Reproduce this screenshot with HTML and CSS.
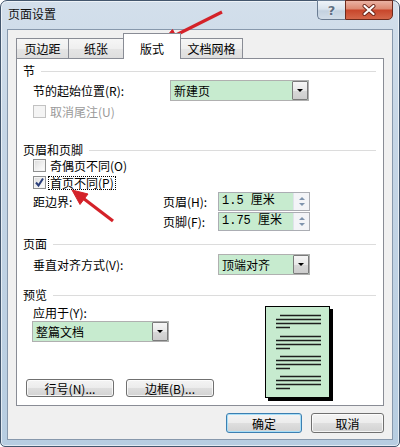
FILE: index.html
```html
<!DOCTYPE html>
<html lang="zh-CN">
<head>
<meta charset="utf-8">
<title>页面设置</title>
<link rel="stylesheet" href="styles.css">
</head>
<body>
<div class="window">
  <div class="titlebar">
    <span class="title">页面设置</span>
    <div class="caption-buttons">
      <div class="cap-btn help">?</div>
      <div class="cap-btn close">
        <svg width="16" height="12" viewBox="0 0 16 12"><path d="M3.5 2 L12.5 10 M12.5 2 L3.5 10" stroke="#6a2418" stroke-width="4" stroke-linecap="round"/><path d="M3.5 2 L12.5 10 M12.5 2 L3.5 10" stroke="#ffffff" stroke-width="2.2" stroke-linecap="round"/></svg>
      </div>
    </div>
  </div>
  <div class="client">
    <div class="tabs">
      <div class="tab t1">页边距</div>
      <div class="tab t2">纸张</div>
      <div class="tab t3 active">版式</div>
      <div class="tab t4">文档网格</div>
    </div>
    <div class="panel">
      <div class="group-title gt-section"><span>节</span><i></i></div>
      <div class="row row-start">
        <span class="lbl lbl-start">节的起始位置(R):</span>
        <div class="select sel-start"><span class="val">新建页</span><b class="dd"></b></div>
      </div>
      <div class="check disabled chk-endnote"><span class="box"></span><span class="ctext">取消尾注(U)</span></div>

      <div class="group-title gt-header"><span>页眉和页脚</span><i></i></div>
      <div class="check chk-odd"><span class="box"></span><span class="ctext">奇偶页不同(O)</span></div>
      <div class="check chk-first"><span class="box checked"><svg width="11" height="11" viewBox="0 0 11 11"><path d="M2 5.5 L4.5 8.5 L9 1.5" fill="none" stroke="#2b3f7a" stroke-width="2"/></svg></span><span class="ctext focus">首页不同(P)</span></div>

      <div class="margin-row mr-1">
        <span class="lbl">距边界:</span>
        <span class="lbl">页眉(H):</span>
        <div class="spin"><span class="val mono">1.5 厘米</span><span class="spin-btns"><b class="up"></b><b class="down"></b></span></div>
      </div>
      <div class="margin-row mr-2">
        <span class="lbl"></span>
        <span class="lbl">页脚(F):</span>
        <div class="spin"><span class="val mono">1.75 厘米</span><span class="spin-btns"><b class="up"></b><b class="down"></b></span></div>
      </div>

      <div class="group-title gt-page"><span>页面</span><i></i></div>
      <div class="row row-valign">
        <span class="lbl lbl-valign">垂直对齐方式(V):</span>
        <div class="select sel-valign"><span class="val">顶端对齐</span><b class="dd"></b></div>
      </div>

      <div class="group-title gt-preview"><span>预览</span><i></i></div>
      <div class="preview">
        <div class="preview-left">
          <div class="lbl apply-lbl">应用于(Y):</div>
          <div class="select sel-apply"><span class="val">整篇文档</span><b class="dd"></b></div>
          <div class="btn-row">
            <div class="btn small">行号(N)...</div>
            <div class="btn small">边框(B)...</div>
          </div>
        </div>
        <div class="page">
          <svg width="63" height="90" viewBox="0 0 63 90">
            <g stroke="#1e1e1e" stroke-width="1.3">
              <path d="M14 8.5 H55 M10 12.5 H55 M10 16.5 H55 M10 20.5 H24"/>
              <path d="M14 29.5 H55 M10 33.5 H55 M10 37.5 H55 M10 41.5 H24"/>
              <path d="M14 49.5 H55 M10 53.5 H55 M10 57.5 H55 M10 61.5 H24"/>
              <path d="M14 69.5 H55 M10 73.5 H55 M10 77.5 H55 M10 81.5 H24"/>
            </g>
          </svg>
        </div>
      </div>
    </div>
    <div class="dialog-buttons">
      <div class="btn default">确定</div>
      <div class="btn cancel">取消</div>
    </div>
  </div>
</div>
<svg class="arrows" width="400" height="447" viewBox="0 0 400 447">
  <g fill="#d42229" stroke="#d42229">
    <line x1="222" y1="12" x2="175" y2="35.5" stroke-width="3.2"/>
    <polygon points="161,43 178.5,41 172.5,29.5" stroke-width="1"/>
    <line x1="113" y1="221" x2="83.5" y2="198.5" stroke-width="3.2"/>
    <polygon points="72,190 80,204.5 88,194" stroke-width="1"/>
  </g>
</svg>
</body>
</html>
```
FILE: styles.css
```css
* { box-sizing: border-box; }
html, body { margin: 0; padding: 0; }
body {
  position: relative;
  width: 400px;
  height: 447px;
  overflow: hidden;
  background: #ffffff;
  font-family: "Noto Sans CJK SC", "Noto Sans", sans-serif;
  font-size: 12px;
  color: #000;
}

.window {
  width: 400px;
  height: 447px;
  border: 1px solid #43566d;
  border-radius: 7px 7px 5px 5px;
  background: linear-gradient(180deg, #d3dfeb 0%, #c6d6e6 30%, #b7cde1 100%);
  box-shadow: inset 0 0 0 1px rgba(255,255,255,0.6);
  padding: 0 6px 6px 6px;
  display: flex;
  flex-direction: column;
}

.titlebar {
  height: 28px;
  display: flex;
  align-items: flex-start;
}
.title {
  padding-left: 1px;
  line-height: 26px;
  font-size: 12px;
  color: #111;
}
.caption-buttons {
  margin-left: auto;
  margin-top: -1px;
  display: flex;
}
.cap-btn {
  height: 20px;
  display: flex;
  align-items: center;
  justify-content: center;
}
.help {
  width: 28px;
  border: 1px solid #6a7d93;
  border-right: none;
  border-radius: 0 0 0 5px;
  background: linear-gradient(180deg, #eef3f8 0%, #d9e3ed 45%, #c3d1df 55%, #d2dde8 100%);
  color: #5f6f82;
  font-family: "DejaVu Sans", sans-serif;
  font-weight: bold;
  font-size: 13px;
  text-shadow: 0 0 2px #fff;
}
.close {
  width: 48px;
  border: 1px solid #6d2a1c;
  border-radius: 0 0 5px 0;
  background: linear-gradient(180deg, #eab2a3 0%, #dd8b74 42%, #c8472c 52%, #d4674a 100%);
}

.client {
  flex: 1;
  background: #f0f0f0;
  border: 1px solid #8798ac;
  padding: 3px 8px 0 8px;
  display: flex;
  flex-direction: column;
}

.tabs {
  position: relative;
  z-index: 2;
  display: flex;
  align-items: flex-start;
  height: 26px;
  margin-bottom: -1px;
}
.tab {
  height: 20px;
  margin-top: 5px;
  margin-left: -1px;
  border: 1px solid #898c95;
  border-bottom: none;
  background: linear-gradient(180deg, #f6f6f6 0%, #efefef 50%, #e5e5e5 51%, #dedede 100%);
  text-align: center;
  line-height: 18px;
  padding-top: 1px;
  white-space: nowrap;
}
.t1 { width: 53px; margin-left: 0; }
.t2 { width: 56px; }
.t3 { width: 58px; }
.t4 { width: 63px; }
.tab.active {
  height: 26px;
  margin-top: 0;
  background: #ffffff;
  padding-top: 6px;
  position: relative;
  z-index: 3;
}

.panel {
  position: relative;
  height: 348px;
  border: 1px solid #898c95;
  background: #ffffff;
  padding: 0 7px 0 6px;
}

.group-title {
  display: flex;
  align-items: center;
  height: 14px;
  line-height: 14px;
}
.group-title i {
  flex: 1;
  height: 1px;
  background: #dcdcdc;
  margin-left: 6px;
}
.gt-section { margin-top: 5px; }
.gt-header { margin-top: 24px; }
.gt-page { margin-top: 6px; }
.gt-preview { margin-top: 13px; }

.row {
  display: flex;
  align-items: center;
  padding-left: 10px;
  height: 21px;
}
.row-start { margin-top: 2px; }
.lbl-start { width: 137px; }
.row-valign { margin-top: 3px; }
.lbl-valign { width: 185px; }

.lbl { white-space: nowrap; }

.select {
  display: flex;
  height: 21px;
  border: 1px solid #b0b0b0;
  background: #c7ebcf;
}
.select .val {
  flex: 1;
  padding-left: 3px;
  line-height: 19px;
  white-space: nowrap;
}
.dd {
  width: 16px;
  height: 19px;
  border: 1px solid #7b7b7b;
  border-radius: 1px;
  background: linear-gradient(180deg, #f6f6f6 0%, #e8e8e8 50%, #d8d8d8 51%, #cdcdcd 100%);
  display: flex;
  align-items: center;
  justify-content: center;
}
.dd::after {
  content: "";
  border-left: 3px solid transparent;
  border-right: 3px solid transparent;
  border-top: 3px solid #000;
}
.sel-start { width: 139px; }
.sel-valign { width: 92px; }
.sel-apply { width: 137px; margin-left: 9px; margin-top: 2px; }

.check {
  display: flex;
  align-items: center;
  height: 15px;
  padding-left: 10px;
}
.chk-endnote { margin-top: 3px; }
.chk-odd { margin-top: 1px; }
.chk-first { margin-top: 2px; }
.box {
  width: 13px;
  height: 13px;
  border: 1px solid #8e8f8f;
  background: linear-gradient(135deg, #dadada 0%, #f2f2f2 60%, #ffffff 100%);
  box-shadow: inset 0 0 0 1px #f4f4f4;
  display: flex;
  align-items: center;
  justify-content: center;
}
.box svg { display: block; }
.check.disabled .box {
  border-color: #c2c2c2;
  background: #f4f4f4;
}
.check.disabled .ctext { color: #9a9a9a; }
.ctext {
  margin-left: 4px;
  line-height: 12px;
  height: 12px;
  white-space: nowrap;
}
.ctext.focus {
  margin-left: 2px;
  padding: 0 1px;
  height: 14px;
  border: 1px dotted #000;
}

.margin-row {
  display: grid;
  grid-template-columns: 130px 55px 92px;
  align-items: center;
  height: 19px;
  padding-left: 10px;
}
.mr-1 { margin-top: 2px; }
.mr-2 { margin-top: 1px; }

.spin {
  display: flex;
  height: 19px;
  border: 1px solid #abadb3;
  background: #c7ebcf;
}
.spin .val {
  flex: 1;
  padding-left: 3px;
  line-height: 17px;
  white-space: nowrap;
}
.mono { font-family: "Liberation Mono", "Noto Sans CJK SC", monospace; font-size: 12px; }
.spin-btns {
  width: 16px;
  border-left: 1px solid #dfe3ea;
  background: #f3f4f7;
  display: flex;
  flex-direction: column;
  align-items: center;
  justify-content: center;
  gap: 3px;
}
.spin-btns .up {
  border-left: 3px solid transparent;
  border-right: 3px solid transparent;
  border-bottom: 3px solid #7f93ad;
}
.spin-btns .down {
  border-left: 3px solid transparent;
  border-right: 3px solid transparent;
  border-top: 3px solid #7f93ad;
}

.preview {
  display: flex;
  align-items: flex-start;
}
.preview-left {
  width: 242px;
}
.apply-lbl {
  margin-top: 4px;
  padding-left: 10px;
  height: 13px;
  line-height: 13px;
}
.btn-row {
  display: flex;
  gap: 12px;
  margin-top: 37px;
  margin-left: 3px;
}
.page {
  margin-top: 4px;
  width: 65px;
  height: 92px;
  border: 1px solid #000;
  background: #c7ebcf;
  box-shadow: 3px 3px 0 #000;
}
.page svg { display: block; }

.btn {
  height: 20px;
  border: 1px solid #707070;
  border-radius: 3px;
  background: linear-gradient(180deg, #f4f4f4 0%, #ececec 48%, #dedede 52%, #d2d2d2 100%);
  box-shadow: inset 0 0 0 1px rgba(255,255,255,0.75);
  display: flex;
  align-items: center;
  justify-content: center;
  white-space: nowrap;
}
.btn.small {
  width: 88px;
  height: 18px;
}

.dialog-buttons {
  display: flex;
  justify-content: flex-end;
  gap: 9px;
  margin-top: 7px;
}
.btn.default {
  width: 76px;
  border-color: #3c7fb1;
  box-shadow: inset 0 0 0 1px #a8def7;
}
.btn.cancel { width: 73px; }

.arrows {
  position: absolute;
  left: 0;
  top: 0;
  pointer-events: none;
}
```
